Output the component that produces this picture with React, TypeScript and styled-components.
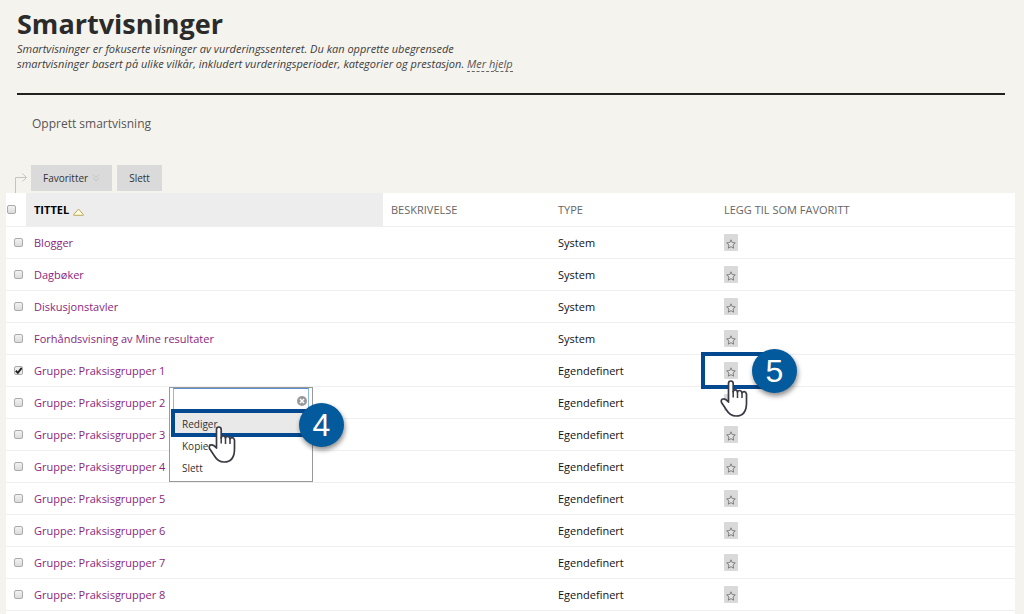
import React from "react";
import styled, { createGlobalStyle, css } from "styled-components";

const Global = createGlobalStyle`
  *, *::before, *::after { box-sizing: border-box; }
  body {
    margin: 0;
    background: #f5f3ee;
    color: #111;
    font-family: "Open Sans", "Liberation Sans", sans-serif;
    font-size: 11px;
    line-height: 16px;
  }
`;

const Page = styled.main`
  display: flex;
  flex-direction: column;
  min-height: 100vh;
  padding: 0 9px 0 6px;
`;

const Header = styled.header`
  margin: 0 10px 0 11px;
  padding: 6px 0 22px;
  border-bottom: 2px solid #231f20;
`;

const Title = styled.h1`
  margin: 0;
  color: #2b2b2b;
  font-size: 27px;
  line-height: 35px;
  font-weight: 700;
`;

const Intro = styled.p`
  margin: 0;
  max-width: 510px;
  color: #3c3c3c;
  font-size: 11px;
  line-height: 15px;
  font-style: italic;
`;

const HelpLink = styled.a`
  color: #555;
  text-decoration: none;
  border-bottom: 1px dashed #666;
`;

const ActionBar = styled.nav`
  padding: 20px 26px 32px;
  line-height: 18px;
`;

const CreateLink = styled.a`
  color: #555;
  font-size: 12px;
  font-weight: 500;
  text-decoration: none;
`;

const Toolbar = styled.div`
  display: flex;
  align-items: flex-start;
  gap: 5px;
  height: 28px;
  padding-left: 9px;
`;

const ToolbarArrow = styled.svg`
  width: 12px;
  height: 28px;
  margin-right: -1px;
`;

const ToolbarButton = styled.button`
  display: flex;
  align-items: center;
  gap: 4px;
  height: 26px;
  padding: 0 12px;
  border: 0;
  background: #dadada;
  color: #333;
  font: 10px/16px "Open Sans", sans-serif;
`;

const TableArea = styled.section`
  flex: 1;
  background: #fff;
`;

const Table = styled.table`
  width: 100%;
  table-layout: fixed;
  border-collapse: separate;
  border-spacing: 0;
`;

const Col = styled.col<{ $width?: number }>`
  ${(p) => p.$width && css`width: ${p.$width}px;`}
`;

const HeadCell = styled.th<{ $sorted?: boolean; $tick?: boolean }>`
  height: 34px;
  padding: 0 ${(p) => (p.$tick ? 1 : 8)}px;
  border-bottom: 1px solid #efefef;
  background: ${(p) => (p.$sorted ? "#ededed" : "#fff")};
  color: ${(p) => (p.$sorted ? "#000" : "#666")};
  font-size: 11px;
  font-weight: ${(p) => (p.$sorted ? 700 : 400)};
  text-align: left;
  vertical-align: middle;
`;

const Cell = styled.td<{ $tick?: boolean; $anchor?: boolean }>`
  height: 32px;
  padding: 0 8px;
  ${(p) => p.$tick && css`padding-right: 0;`}
  ${(p) => p.$anchor && css`position: relative;`}
  border-bottom: 1px solid #efefef;
  vertical-align: middle;
`;

const SortIcon = styled.svg`
  width: 11px;
  height: 8px;
  margin-left: 4px;
  vertical-align: -2px;
`;

const Tick = styled.input`
  appearance: none;
  display: block;
  width: 9px;
  height: 9px;
  margin: 0;
  border: 1px solid #aaa;
  border-radius: 2px;
  background: linear-gradient(#f2f2f2, #dcdcdc);
  &:checked {
    background: #eee
      url("data:image/svg+xml,%3Csvg xmlns='http://www.w3.org/2000/svg' viewBox='0 0 8 8'%3E%3Cpath d='M1.2 4 3.2 6 6.8 1.4' fill='none' stroke='%23222' stroke-width='1.8'/%3E%3C/svg%3E")
      center / 8px 8px no-repeat;
  }
`;

const ViewLink = styled.a`
  color: #8b1f7e;
  text-decoration: none;
`;

const FavButton = styled.button`
  display: flex;
  align-items: center;
  justify-content: center;
  width: 14px;
  height: 17px;
  padding: 2px 0 0;
  border: 0;
  border-radius: 1px;
  background: #d9d9d9;
`;

const Menu = styled.div`
  position: absolute;
  z-index: 1;
  top: 32px;
  left: 143px;
  width: 144px;
  padding: 0 3px 2px;
  border: 1px solid #999;
  background: #fff;
`;

const SearchField = styled.label`
  display: flex;
  align-items: center;
  height: 25px;
  padding-right: 1px;
  border: 1px solid #8db8ea;
  border-top-color: #5d8fd0;
`;

const SearchInput = styled.input`
  flex: 1;
  min-width: 0;
  height: 20px;
  border: 0;
  outline: 0;
  background: transparent;
`;

const MenuItem = styled.button<{ $active?: boolean }>`
  display: block;
  width: 100%;
  height: 22px;
  padding: 0 9px;
  border: 0;
  background: ${(p) => (p.$active ? "#e9e9e9" : "#fff")};
  color: #333;
  font: 10px/22px "Open Sans", sans-serif;
  text-align: left;
`;

const Frame = styled.div<{ $x: number; $y: number; $w: number; $h: number }>`
  position: absolute;
  z-index: 2;
  left: ${(p) => p.$x}px;
  top: ${(p) => p.$y}px;
  width: ${(p) => p.$w}px;
  height: ${(p) => p.$h}px;
  border: 4px solid #03498f;
  pointer-events: none;
`;

const StepBadge = styled.span<{ $x: number; $y: number }>`
  position: absolute;
  z-index: 3;
  left: ${(p) => p.$x}px;
  top: ${(p) => p.$y}px;
  width: 45px;
  height: 44px;
  border-radius: 50%;
  background: #035a9c;
  box-shadow: 1px 3px 5px rgba(0, 0, 0, 0.45);
  color: #fff;
  font: 32px/44px "Liberation Sans", Arial, sans-serif;
  text-align: center;
`;

const Hand = styled.svg<{ $x: number; $y: number }>`
  position: absolute;
  z-index: 4;
  left: ${(p) => p.$x}px;
  top: ${(p) => p.$y}px;
  width: 28px;
  height: 37px;
`;

const HandPointer = ({ x, y }: { x: number; y: number }) => (
  <Hand $x={x} $y={y} viewBox="0 0 28 37" aria-hidden="true">
    <path
      d="M8.500 22V3.500Q8.500 1 10.800 1t2.400 2.500V12Q13.500 9.800 15.300 9.800t2.200 2.200Q18 10.500 19.700 10.500t2.300 2.300Q22.500 11.700 24.200 11.700t2.300 2.300V23Q26.500 36 16 36 10 36 6.500 30L1.500 22.500Q.6 19.500 3 19 5.500 18.500 8.500 22Z"
      fill="#fff"
      stroke="#3a3a44"
      strokeWidth="1.700"
      strokeLinejoin="round"
    />
    <path d="M13.200 11v6.500M17.500 12v6M22 13v5" fill="none" stroke="#3a3a44" strokeWidth="1.500" />
  </Hand>
);

const Star = () => (
  <svg width="10" height="10" viewBox="0 0 10 10" aria-hidden="true">
    <path
      d="M5 .8 6.200 3.600 9.300 3.900 7 6 7.700 9.200 5 7.600 2.300 9.200 3 6 .7 3.900 3.800 3.600Z"
      fill="#e4e4e4"
      stroke="#808080"
      strokeWidth="1"
    />
  </svg>
);

const views = [
  { title: "Blogger", type: "System" },
  { title: "Dagbøker", type: "System" },
  { title: "Diskusjonstavler", type: "System" },
  { title: "Forhåndsvisning av Mine resultater", type: "System" },
  ...[1, 2, 3, 4, 5, 6, 7, 8].map((n) => ({
    title: `Gruppe: Praksisgrupper ${n}`,
    type: "Egendefinert",
  })),
];

const SELECTED = 4;

const ContextMenu = () => (
  <>
    <Menu>
      <SearchField>
        <SearchInput type="text" aria-label="Søk i menyen" />
        <svg width="10" height="10" viewBox="0 0 10 10" aria-hidden="true">
          <circle cx="5" cy="5" r="5" fill="#999" />
          <path d="M3 3l4 4M7 3l-4 4" stroke="#fff" strokeWidth="1.500" />
        </svg>
      </SearchField>
      <MenuItem $active>Rediger</MenuItem>
      <MenuItem>Kopier</MenuItem>
      <MenuItem>Slett</MenuItem>
    </Menu>
    <Frame $x={145} $y={54} $w={140} $h={28} />
    <StepBadge $x={273} $y={48}>4</StepBadge>
    <HandPointer x={182} y={71} />
  </>
);

export default function App() {
  return (
    <>
      <Global />
      <Page>
        <Header>
          <Title>Smartvisninger</Title>
          <Intro>
            Smartvisninger er fokuserte visninger av vurderingssenteret. Du kan opprette ubegrensede
            <br />
            smartvisninger basert på ulike vilkår, inkludert vurderingsperioder, kategorier og prestasjon.{" "}
            <HelpLink href="#hjelp">Mer hjelp</HelpLink>
          </Intro>
        </Header>
        <ActionBar>
          <CreateLink href="#opprett">Opprett smartvisning</CreateLink>
        </ActionBar>
        <Toolbar>
          <ToolbarArrow viewBox="0 0 12 28" aria-hidden="true">
            <path d="M.5 28V12.500H11M7.500 8.500l4 4-4 4" fill="none" stroke="#c4c4c0" />
          </ToolbarArrow>
          <ToolbarButton>
            Favoritter
            <svg width="8" height="8" viewBox="0 0 8 8" aria-hidden="true">
              <path d="M1 .5l3 3 3-3M1 4l3 3 3-3" fill="none" stroke="#c2c2c2" />
            </svg>
          </ToolbarButton>
          <ToolbarButton>Slett</ToolbarButton>
        </Toolbar>
        <TableArea>
          <Table>
            <colgroup>
              <Col $width={20} />
              <Col $width={357} />
              <Col $width={167} />
              <Col $width={166} />
              <Col />
            </colgroup>
            <thead>
              <tr>
                <HeadCell $tick>
                  <Tick type="checkbox" aria-label="Velg alle" />
                </HeadCell>
                <HeadCell $sorted>
                  TITTEL
                  <SortIcon viewBox="0 0 11 8" aria-hidden="true">
                    <path d="M5.500 1 10.300 6.500v.8H.7v-.8Z" fill="#fffbe0" stroke="#b9a95c" />
                  </SortIcon>
                </HeadCell>
                <HeadCell>BESKRIVELSE</HeadCell>
                <HeadCell>TYPE</HeadCell>
                <HeadCell>LEGG TIL SOM FAVORITT</HeadCell>
              </tr>
            </thead>
            <tbody>
              {views.map((view, i) => (
                <tr key={view.title}>
                  <Cell $tick>
                    <Tick type="checkbox" aria-label={view.title} defaultChecked={i === SELECTED} />
                  </Cell>
                  <Cell $anchor={i === SELECTED}>
                    <ViewLink href="#visning">{view.title}</ViewLink>
                    {i === SELECTED && <ContextMenu />}
                  </Cell>
                  <Cell />
                  <Cell>{view.type}</Cell>
                  <Cell $anchor={i === SELECTED}>
                    <FavButton aria-label="Legg til som favoritt">
                      <Star />
                    </FavButton>
                    {i === SELECTED && (
                      <>
                        <Frame $x={-15} $y={-3} $w={72} $h={37} />
                        <StepBadge $x={36} $y={-6}>5</StepBadge>
                        <HandPointer x={4} y={25} />
                      </>
                    )}
                  </Cell>
                </tr>
              ))}
            </tbody>
          </Table>
        </TableArea>
      </Page>
    </>
  );
}
